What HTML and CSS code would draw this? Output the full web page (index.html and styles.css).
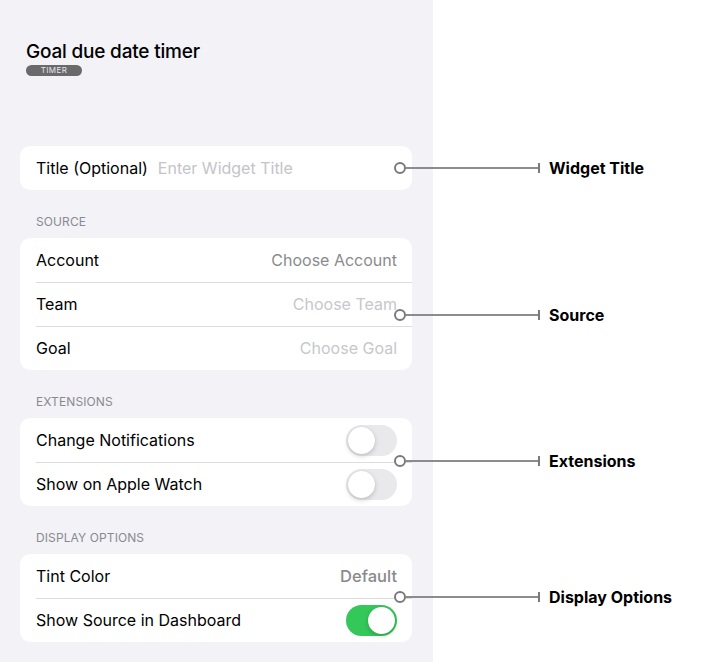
FILE: index.html
```html
<!DOCTYPE html>
<html lang="en">
<head>
<meta charset="utf-8">
<title>Goal due date timer</title>
<link rel="stylesheet" href="styles.css">
</head>
<body>
<div class="app">
  <div class="panel">
    <header class="head">
      <h1 class="title">Goal due date timer</h1>
      <span class="badge">TIMER</span>
    </header>

    <div class="card first">
      <div class="row">
        <span class="label">Title (Optional)</span>
        <span class="placeholder">Enter Widget Title</span>
      </div>
    </div>

    <div class="section">SOURCE</div>
    <div class="card">
      <div class="row"><span class="label">Account</span><span class="value">Choose Account</span></div>
      <div class="row"><span class="label">Team</span><span class="value dim">Choose Team</span></div>
      <div class="row"><span class="label">Goal</span><span class="value dim">Choose Goal</span></div>
    </div>

    <div class="section">EXTENSIONS</div>
    <div class="card">
      <div class="row"><span class="label">Change Notifications</span><span class="toggle"><span class="knob"></span></span></div>
      <div class="row"><span class="label">Show on Apple Watch</span><span class="toggle"><span class="knob"></span></span></div>
    </div>

    <div class="section">DISPLAY OPTIONS</div>
    <div class="card">
      <div class="row"><span class="label">Tint Color</span><span class="value strong">Default</span></div>
      <div class="row"><span class="label">Show Source in Dashboard</span><span class="toggle on"><span class="knob"></span></span></div>
    </div>
  </div>
  <div class="canvas"></div>

  <div class="callout c1"><span class="dot"></span><span class="line"></span><span class="tick"></span><span class="ctext">Widget Title</span></div>
  <div class="callout c2"><span class="dot"></span><span class="line"></span><span class="tick"></span><span class="ctext">Source</span></div>
  <div class="callout c3"><span class="dot"></span><span class="line"></span><span class="tick"></span><span class="ctext">Extensions</span></div>
  <div class="callout c4"><span class="dot"></span><span class="line"></span><span class="tick"></span><span class="ctext">Display Options</span></div>
</div>
</body>
</html>
```

FILE: styles.css
```css
* { box-sizing: border-box; }
html, body { margin: 0; padding: 0; }
body {
  font-family: Inter, "Liberation Sans", sans-serif;
  color: #000;
  background: #fff;
}
.app {
  position: relative;
  display: flex;
  width: 722px;
  height: 662px;
  overflow: hidden;
}
.panel {
  width: 433px;
  height: 662px;
  background: #f2f2f7;
  padding: 0 21px 0 20px;
  display: flex;
  flex-direction: column;
}
.canvas { flex: 1; background: #fff; }

.head {
  padding: 40px 0 0 6px;
  height: 146px;
  display: flex;
  flex-direction: column;
  align-items: flex-start;
}
.title {
  margin: 0;
  font-size: 19px;
  line-height: 24px;
  font-weight: 500;
  letter-spacing: -0.2px;
}
.badge {
  margin-top: 1px;
  width: 56px;
  height: 11px;
  border-radius: 6px;
  background: #6a6a6c;
  color: #e6e6e8;
  font-size: 8px;
  line-height: 11px;
  text-align: center;
  letter-spacing: 0.4px;
}

.card {
  background: #fff;
  border-radius: 10px;
  overflow: hidden;
}
.row {
  height: 44px;
  display: flex;
  align-items: center;
  justify-content: space-between;
  padding: 0 15px 0 16px;
  font-size: 16px;
  position: relative;
}
.row + .row::before {
  content: "";
  position: absolute;
  top: 0;
  left: 16px;
  right: 0;
  height: 1px;
  background: #dcdce0;
}
.card.first .row { justify-content: flex-start; gap: 10px; }
.label { color: #000; }
.placeholder { color: #c4c4c7; }
.value { color: #8a8a8e; }
.value.dim { color: #c7c7cc; }
.value.strong { font-weight: 500; font-size: 16.5px; }

.section {
  margin: 23px 0 7px 16px;
  height: 18px;
  line-height: 18px;
  font-size: 12px;
  color: #8a8a8e;
  letter-spacing: 0.1px;
}

.toggle {
  width: 51px;
  height: 31px;
  border-radius: 16px;
  background: #e9e9eb;
  position: relative;
  flex: none;
}
.toggle .knob {
  position: absolute;
  top: 2px;
  left: 2px;
  width: 27px;
  height: 27px;
  border-radius: 50%;
  background: #fff;
  box-shadow: 0 2px 5px rgba(0,0,0,0.18), 0 0 1px rgba(0,0,0,0.12);
}
.toggle.on { background: #34c759; }
.toggle.on .knob { left: 22px; }

.callout {
  position: absolute;
  left: 394px;
  height: 12px;
  display: flex;
  align-items: center;
}
.c1 { top: 162px; }
.c2 { top: 309px; }
.c3 { top: 455px; }
.c4 { top: 591px; }
.dot {
  width: 12px;
  height: 12px;
  border-radius: 50%;
  border: 2px solid #7a7a7c;
  background: #fff;
  flex: none;
}
.line {
  width: 132px;
  height: 2px;
  background: #8c8c8e;
}
.tick {
  width: 2px;
  height: 10px;
  background: #7a7a7c;
}
.ctext {
  margin-left: 9px;
  font-size: 16px;
  font-weight: 700;
  white-space: nowrap;
}
```
